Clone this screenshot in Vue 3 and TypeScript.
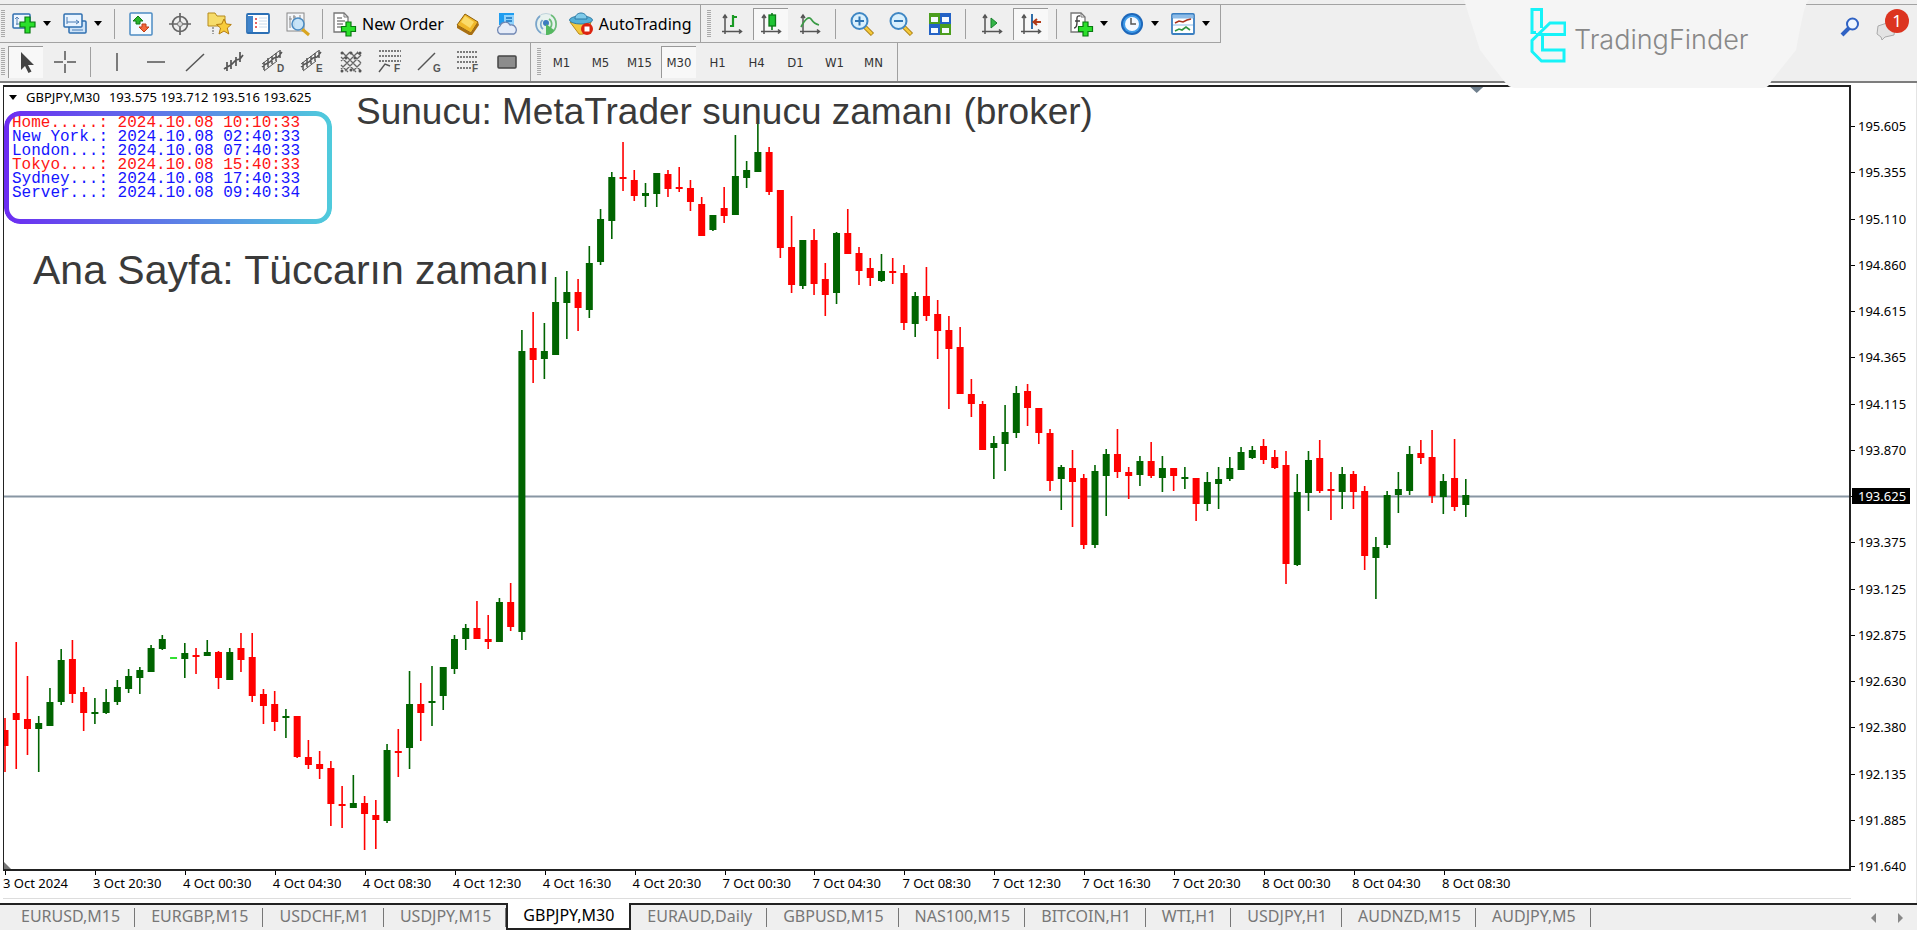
<script setup lang="ts">
import { ref } from 'vue'

type Kind = 'icon' | 'drop' | 'label' | 'sep' | 'end' | 'grip' | 'text'
interface Tool { kind: Kind; name?: string; icon?: string; active?: boolean }
type Candle = [up: number, high: number, top: number, bottom: number, low: number]

const plus = '<path d="M13 9h5v4.500h4.500v5H18V23h-5v-4.500H8.500v-5H13z" fill="#2be02b" stroke="#087a10" stroke-width="1.200"/>'
const axes = '<path d="M5 4v18M2 19.500h19M3 6l2-3 2 3M19 17.500l2.500 2-2.500 2" fill="none" stroke="#555" stroke-width="1.500"/>'
const sheet = '<path d="M2 1h10l4 4v15H2z" fill="#fff" stroke="#777" stroke-width="1.300"/><path d="M12 1v4h4" fill="none" stroke="#777"/>'
const letter = (c: string) => `<text x="16" y="22" font-size="10" font-weight="700" font-family="Liberation Sans, sans-serif" fill="#555">${c}</text>`
const bars = '<path d="M3 21v-8M7 18v-9M11 15V7M15 12V4M19 9V1M1 18l4-3 4-2 4-4 4-1 4-5" fill="none" stroke="#555" stroke-width="1.500"/>'
const lens = '<path d="M15 15l7.500 7.500" stroke="#a77c12" stroke-width="4.500"/><path d="M15 15l7 7" stroke="#f4c93b" stroke-width="2.500"/><circle cx="9.500" cy="9" r="8" fill="#d9f0fd" stroke="#3f87c4" stroke-width="2"/>'

const icons: Record<string, string> = {
  newchart: '<rect x="1" y="2" width="17" height="14" rx="1" fill="#eef6ff" stroke="#2f6fb0" stroke-width="1.500"/><path d="M5 5v8M3 7l2-2 2 2M4 12h5" fill="none" stroke="#5b86b5"/><path d="M13 5h5v5h5v5h-5v6h-5v-6H8v-5h5z" fill="#2be02b" stroke="#087a10" stroke-width="1.200"/>',
  profiles: '<rect x="6" y="9" width="17" height="12" rx="1" fill="#cfe4f8" stroke="#2f6fb0" stroke-width="1.500"/><rect x="1" y="2" width="18" height="13" rx="1" fill="#e9f4ff" stroke="#2f6fb0" stroke-width="1.500"/><path d="M4 5v7M4 10h12M13 8l3 2-3 2M9 18h11" fill="none" stroke="#4b7db5"/>',
  market: '<rect x="1" y="1" width="22" height="22" rx="1" fill="#f4faff" stroke="#4c8cc4" stroke-width="1.500"/><path d="M9 4l5 5h-3v3H7V9H4z" fill="#2bb52b" stroke="#117a17"/><path d="M15 20l-5-5h3v-3h4v3h3z" fill="#f2683a" stroke="#bf3d16"/>',
  target: '<circle cx="12" cy="12" r="7.500" fill="none" stroke="#666" stroke-width="1.700"/><path d="M12 1v22M1 12h22" stroke="#666" stroke-width="1.700"/><circle cx="12" cy="12" r="2.500" fill="#ddd" stroke="#777"/>',
  folder: '<path d="M1 1h7l2 3h8v10H1z" fill="#f6dc6a" stroke="#b58a1d"/><path d="M6 15v7" stroke="#555" stroke-dasharray="2 1"/><path d="M17 7l2.300 5 5 .5-4 3.500 1.500 6-4.800-3-5 3 1.500-6-4-3.500 5.200-.5z" fill="#f8cc3c" stroke="#b47c10"/>',
  terminal: '<rect x="1" y="2" width="22" height="19" rx="1" fill="#fff" stroke="#2b6fb5" stroke-width="1.800"/><path d="M2 4h5v16H2z" fill="#3f84cc"/><path d="M9 7h2M9 11h2M9 15h2" stroke="#d33" stroke-width="1.500"/><path d="M13 6h8M13 9h8M13 12h8M13 15h8" stroke="#cadcee"/>',
  tester: '<rect x="2" y="1" width="17" height="18" fill="#f5f7fa" stroke="#888"/><path d="M5 4v12M9 3v13M15 3v5M4 7h3M8 5h3" stroke="#888"/><path d="M17 17l7 6" stroke="#d9a520" stroke-width="3"/><circle cx="13" cy="12" r="6" fill="#bfe0f7" fill-opacity=".85" stroke="#4b8bc2" stroke-width="1.500"/>',
  order: sheet + '<path d="M5 6h5M5 9h8M5 12h6M5 15h4" stroke="#888" stroke-width="1.300"/><g transform="translate(1 1)">' + plus + '</g>',
  book: '<path d="M1 13L9 2l13 8-7 11z" fill="#f0b82a" stroke="#8f600c"/><path d="M1 13l14 8 7-11 1 3-7 10-3 0L1 16z" fill="#a86f12"/><path d="M9 4l9 6-4 6-9-6z" fill="#fbdc6b"/>',
  cloud: '<path d="M4 1h15v12H4z" fill="#1f9df0"/><path d="M9 3h10v10H9z" fill="#8fd2fb"/><path d="M11 6h6M11 9h6" stroke="#1673c0" stroke-width="1.500"/><path d="M5 22a4.500 4.500 0 0 1 0-8 5.500 5.500 0 0 1 10-1 5 5 0 0 1 4 9z" fill="#e6ecf8" stroke="#6f86b3" stroke-width="1.300"/>',
  signal: '<circle cx="12" cy="12" r="10.500" fill="#e8f2ef" stroke="#bfd3dc"/><path d="M7 21a10.500 10.500 0 0 1-1-17M9 17a6 6 0 0 1-.5-9" fill="none" stroke="#7aa5cb" stroke-width="1.700"/><path d="M17 3a10.500 10.500 0 0 1 0 18M15 7a6 6 0 0 1 0 10" fill="none" stroke="#6cbc78" stroke-width="1.700"/><circle cx="12" cy="11" r="3" fill="#3d7cc0"/><path d="M12 12v11c4 0 7-2 8-5z" fill="#55b860"/>',
  auto: '<path d="M1 10l9 12c3 1 8-1 9-3l3-9z" fill="#f5c93e" stroke="#b98a17"/><ellipse cx="12" cy="8" rx="11.500" ry="4" fill="#55b1d8" stroke="#2f7ba5"/><path d="M6 7c0-8 12-8 12 0z" fill="#7fcbea" stroke="#2f7ba5"/><circle cx="18" cy="17" r="6" fill="#dc2410"/><rect x="15.500" y="14.500" width="5" height="5" fill="#fff"/>',
  barchart: axes + '<path d="M13 3v12M10 14h3M13 5h4" stroke="#199a24" stroke-width="2.200"/>',
  candles: axes + '<path d="M13 1v17" stroke="#0c7a18" stroke-width="1.600"/><rect x="10" y="3" width="6.500" height="11" fill="#1fc433" stroke="#0c7a18" stroke-width="1.300"/>',
  line: axes + '<path d="M3 15c4-8 8-11 10-8s4 5 8 6" fill="none" stroke="#3b9b46" stroke-width="1.700"/>',
  zoomin: lens + '<path d="M5 9h9M9.500 4.500v9" stroke="#2f76b5" stroke-width="2"/>',
  zoomout: lens + '<path d="M5 9h9" stroke="#2f76b5" stroke-width="2"/>',
  tiles: '<path d="M1 1h11v11H1zM12 12h11v11H12z" fill="#4c9e1f"/><path d="M12 1h11v11H12zM1 12h11v11H1z" fill="#2463c6"/><path d="M3 5h7v5H3zM14 5h7v5h-7zM3 16h7v5H3zM14 16h7v5h-7z" fill="#f7fbff"/>',
  scroll: axes + '<path d="M11 6l6 5-6 5z" fill="#35b548" stroke="#17802a"/>',
  shift: axes + '<path d="M13 2v15" stroke="#2f6da8" stroke-width="2"/><path d="M22 10h-6M18 7l-3.500 3 3.500 3" fill="none" stroke="#b23a17" stroke-width="2"/>',
  indicators: sheet + '<path d="M11 4C7 3 8 7 8 10s0 6-3 6M6 9h5" fill="none" stroke="#444" stroke-width="1.400"/><g transform="translate(1 1)">' + plus + '</g>',
  clock: '<circle cx="12" cy="12" r="11" fill="#1d67ba"/><circle cx="12" cy="12" r="9" fill="#3f9be8"/><circle cx="12" cy="12" r="7" fill="#f3f9ff"/><path d="M11 6v6h5" fill="none" stroke="#555" stroke-width="1.500"/>',
  template: '<rect x="1" y="2" width="22" height="20" rx="1" fill="#fff" stroke="#3b7fc1" stroke-width="1.800"/><path d="M2 3h20v3H2zM2 13h20" fill="#8dbce8" stroke="#8dbce8"/><path d="M4 11l4-2 4 1 4-2 4-1" fill="none" stroke="#a8321d" stroke-width="1.600"/><path d="M4 19l4-2 3 1 4-3 4 3" fill="none" stroke="#2e9440" stroke-width="1.600"/>',
  cursor: '<path d="M7 1v18l4-4 3.500 7 3-1.500L14 14h6z" fill="#444"/>',
  cross: '<path d="M12 1v9M12 14v9M1 12h9M14 12h9" stroke="#555" stroke-width="1.500"/>',
  vline: '<path d="M12 3v18" stroke="#555" stroke-width="1.500"/>',
  hline: '<path d="M3 12h18" stroke="#555" stroke-width="1.500"/>',
  trend: '<path d="M3 21L21 4" stroke="#555" stroke-width="1.500"/>',
  channel: '<path d="M5 21v-9M9 19v-9M14 16V7M18 12V2M2 19l3-2 4-2 5-5 4-1 3-4" fill="none" stroke="#555" stroke-width="1.700"/>',
  regress: '<g transform="translate(0 -1)">' + bars + '<path d="M1 15L18 2M3 22L16 12" stroke="#555"/></g>' + letter('D'),
  equid: '<g transform="translate(0 -1)">' + bars + '<path d="M1 15L18 2M3 22L16 12" stroke="#555"/></g>' + letter('E'),
  grid: '<path d="M2 7l15 15M2 15l7 7M3 2l19 19M11 2l11 11M18 2l4 4M22 5L6 21M22 13l-8 8M19 2L2 19M11 2l-9 9" stroke="#666" stroke-width="1.300"/><g fill="#555"><circle cx="3" cy="3" r="1.500"/><circle cx="12" cy="3" r="1.500"/><circle cx="21" cy="3" r="1.500"/><circle cx="7" cy="8" r="1.500"/><circle cx="16" cy="8" r="1.500"/><circle cx="3" cy="21" r="1.500"/><circle cx="12" cy="20" r="1.500"/><circle cx="21" cy="21" r="1.500"/></g>',
  expand: '<path d="M1 1h22M1 6h22M1 11h22" stroke="#555" stroke-width="1.500" stroke-dasharray="2 1"/><path d="M1 22l6-8 5 2" fill="none" stroke="#555" stroke-width="1.400"/>' + letter('F'),
  gann: '<path d="M1 20L18 3" stroke="#555" stroke-width="1.500"/>' + letter('G'),
  fibo: '<path d="M1 2h20M1 7h20M1 12h20M1 18h14" stroke="#555" stroke-width="1.500" stroke-dasharray="2 1"/>' + letter('F'),
  rect: '<rect x="3" y="6" width="18" height="12" rx="1" fill="#8c8c8c" stroke="#444" stroke-width="1.500"/>'
}

const i = (icon: string, name: string, active = false): Tool => ({ kind: 'icon', icon, name, active })
const d = (icon: string, name: string): Tool => ({ kind: 'drop', icon, name })
const l = (icon: string, name: string): Tool => ({ kind: 'label', icon, name })
const t = (name: string, active = false): Tool => ({ kind: 'text', name, active })
const sep: Tool = { kind: 'sep' }
const end: Tool = { kind: 'end' }
const grip: Tool = { kind: 'grip' }

const toolbars: Tool[][] = [
  [grip, d('newchart', 'New chart'), d('profiles', 'Profiles'), sep,
    i('market', 'Market watch'), i('target', 'Data window'), i('folder', 'Navigator'), i('terminal', 'Terminal'), i('tester', 'Strategy tester'), sep,
    l('order', 'New Order'), i('book', 'MetaEditor'), i('cloud', 'Cloud'), i('signal', 'Signals'), l('auto', 'AutoTrading'), end,
    grip, i('barchart', 'Bar chart'), i('candles', 'Candlesticks', true), i('line', 'Line chart'), sep,
    i('zoomin', 'Zoom in'), i('zoomout', 'Zoom out'), i('tiles', 'Tile windows'), sep,
    i('scroll', 'Auto scroll'), i('shift', 'Chart shift', true), sep,
    d('indicators', 'Indicators'), d('clock', 'Periods'), d('template', 'Templates'), end],
  [grip, i('cursor', 'Cursor', true), i('cross', 'Crosshair'), sep,
    i('vline', 'Vertical line'), i('hline', 'Horizontal line'), i('trend', 'Trendline'), i('channel', 'Channel'), i('regress', 'Deviation channel'), i('equid', 'Equidistant channel'),
    i('grid', 'Gann grid'), i('expand', 'Fibonacci expansion'), i('gann', 'Gann line'), i('fibo', 'Fibonacci retracement'), i('rect', 'Rectangle'), end,
    grip, t('M1'), t('M5'), t('M15'), t('M30', true), t('H1'), t('H4'), t('D1'), t('W1'), t('MN'), end]
]

const clocks = [
  { text: 'Home.....: 2024.10.08 10:10:33', hot: true },
  { text: 'New York.: 2024.10.08 02:40:33', hot: false },
  { text: 'London...: 2024.10.08 07:40:33', hot: false },
  { text: 'Tokyo....: 2024.10.08 15:40:33', hot: true },
  { text: 'Sydney...: 2024.10.08 17:40:33', hot: false },
  { text: 'Server...: 2024.10.08 09:40:34', hot: false }
]

const prices = ['195.605', '195.355', '195.110', '194.860', '194.615', '194.365', '194.115', '193.870', '193.625', '193.375', '193.125', '192.875', '192.630', '192.380', '192.135', '191.885', '191.640']
const currentPrice = '193.625'
const times = ['3 Oct 2024', '3 Oct 20:30', '4 Oct 00:30', '4 Oct 04:30', '4 Oct 08:30', '4 Oct 12:30', '4 Oct 16:30', '4 Oct 20:30', '7 Oct 00:30', '7 Oct 04:30', '7 Oct 08:30', '7 Oct 12:30', '7 Oct 16:30', '7 Oct 20:30', '8 Oct 00:30', '8 Oct 04:30', '8 Oct 08:30']
const tabs = ['EURUSD,M15', 'EURGBP,M15', 'USDCHF,M1', 'USDJPY,M15', 'GBPJPY,M30', 'EURAUD,Daily', 'GBPUSD,M15', 'NAS100,M15', 'BITCOIN,H1', 'WTI,H1', 'USDJPY,H1', 'AUDNZD,M15', 'AUDJPY,M5']
const activeTab = ref('GBPJPY,M30')

const candles: Candle[] = [
  [0, 718, 730, 746, 772], [0, 642, 713, 720, 769], [0, 676, 719, 729, 755], [1, 716, 723, 729, 772], [1, 688, 702, 726, 726],
  [1, 649, 660, 702, 705], [0, 640, 659, 694, 703], [0, 687, 692, 713, 731], [1, 698, 712, 713, 724], [1, 689, 702, 713, 714],
  [1, 680, 687, 702, 705], [1, 669, 676, 689, 693], [1, 667, 670, 678, 694], [1, 645, 648, 672, 672], [1, 635, 639, 649, 650],
  [2, 657, 657, 659, 659], [1, 643, 653, 659, 678], [0, 648, 655, 656, 674], [1, 640, 652, 656, 656], [0, 651, 652, 678, 689],
  [1, 648, 652, 680, 680], [0, 633, 648, 660, 672], [0, 633, 657, 696, 702], [0, 689, 694, 706, 724], [0, 691, 704, 722, 731],
  [1, 709, 716, 718, 738], [0, 716, 716, 757, 758], [0, 740, 757, 765, 769], [0, 751, 764, 769, 779], [0, 761, 768, 804, 826],
  [0, 786, 804, 806, 828], [1, 775, 803, 808, 808], [0, 796, 803, 814, 850], [0, 800, 815, 820, 849], [1, 744, 750, 821, 823],
  [0, 729, 751, 753, 777], [1, 671, 704, 748, 769], [0, 683, 704, 713, 741], [1, 666, 701, 703, 726], [1, 667, 667, 696, 710],
  [1, 635, 639, 669, 674], [1, 624, 628, 639, 650], [0, 601, 628, 639, 639], [0, 615, 639, 642, 649], [1, 598, 602, 642, 642],
  [0, 583, 602, 627, 631], [1, 330, 351, 632, 640], [0, 312, 348, 360, 383], [1, 323, 351, 359, 379], [1, 277, 302, 355, 355],
  [1, 271, 292, 303, 339], [0, 279, 292, 308, 331], [1, 246, 263, 310, 318], [1, 209, 219, 262, 265], [1, 172, 177, 221, 239],
  [0, 142, 177, 179, 191], [0, 170, 180, 196, 201], [1, 183, 193, 196, 207], [1, 173, 173, 194, 207], [0, 170, 174, 189, 197],
  [0, 167, 187, 188, 192], [0, 180, 188, 202, 211], [0, 197, 204, 236, 236], [1, 215, 215, 230, 231], [0, 187, 208, 216, 223],
  [1, 135, 176, 215, 215], [1, 161, 170, 178, 188], [1, 124, 152, 172, 172], [0, 147, 152, 192, 195], [0, 190, 190, 248, 258],
  [0, 216, 247, 285, 293], [1, 240, 240, 286, 289], [0, 229, 240, 284, 295], [0, 263, 279, 295, 316], [1, 232, 233, 293, 304],
  [0, 209, 233, 254, 254], [0, 247, 253, 271, 285], [0, 258, 268, 278, 286], [1, 254, 271, 281, 282], [0, 258, 271, 273, 284],
  [0, 265, 273, 323, 330], [1, 292, 296, 324, 337], [0, 267, 296, 316, 321], [0, 300, 314, 331, 359], [0, 316, 330, 349, 409],
  [0, 327, 347, 394, 394], [0, 379, 394, 404, 417], [0, 401, 404, 450, 450], [1, 436, 443, 448, 479], [1, 405, 432, 444, 471],
  [1, 386, 393, 433, 438], [0, 384, 391, 408, 426], [0, 408, 408, 433, 444], [0, 429, 433, 481, 491], [1, 465, 467, 479, 510],
  [0, 450, 468, 482, 527], [0, 474, 478, 545, 549], [1, 465, 471, 545, 548], [1, 449, 454, 476, 516], [0, 429, 454, 472, 478],
  [0, 467, 472, 476, 499], [1, 456, 461, 475, 486], [0, 442, 461, 476, 478], [1, 456, 468, 478, 492], [0, 468, 468, 476, 491],
  [1, 467, 477, 478, 489], [0, 478, 478, 504, 521], [1, 472, 482, 504, 511], [1, 467, 479, 484, 509], [1, 457, 468, 479, 481],
  [1, 447, 452, 470, 470], [1, 446, 450, 458, 459], [0, 439, 446, 460, 464], [0, 450, 457, 468, 469], [0, 451, 465, 564, 584],
  [1, 474, 492, 565, 566], [1, 451, 460, 493, 511], [0, 440, 458, 491, 493], [0, 472, 489, 491, 520], [1, 467, 474, 492, 509],
  [0, 471, 474, 492, 509], [0, 486, 491, 556, 570], [1, 537, 547, 558, 599], [1, 491, 495, 545, 548], [1, 472, 489, 495, 513],
  [1, 446, 454, 491, 495], [0, 440, 453, 458, 464], [0, 430, 457, 496, 503], [1, 474, 481, 497, 514], [0, 439, 478, 507, 511],
  [1, 479, 495, 505, 517]
]
const colours = ['#ff0000', '#006400', '#32e032']
const shapes = candles.map(([up, high, top, bottom, low], n) => ({
  x: 5 + n * 11.243, high, low, top, height: Math.max(bottom - top, 2), fill: colours[up]
}))
</script>

<template>
  <main class="app">
    <header class="tools">
      <div v-for="(row, r) in toolbars" :key="r" class="row">
        <div class="bar">
          <template v-for="(tool, n) in row" :key="n">
            <span v-if="tool.kind === 'sep' || tool.kind === 'end' || tool.kind === 'grip'" :class="tool.kind"></span>
            <button v-else type="button" :class="['tool', tool.kind, { active: tool.active }]" :aria-label="tool.name">
              <svg v-if="tool.icon" class="icon" viewBox="0 0 24 24" aria-hidden="true" v-html="icons[tool.icon]"></svg>
              <span v-if="tool.kind === 'label' || tool.kind === 'text'">{{ tool.name }}</span>
              <span v-if="tool.kind === 'drop'" class="caret"></span>
            </button>
          </template>
        </div>
      </div>
      <div class="corner">
        <button type="button" class="plain" aria-label="Search">
          <svg width="20" height="20" viewBox="0 0 20 20"><path d="M2 18l7-7" stroke="#2f62c4" stroke-width="4" /><circle cx="12.500" cy="7" r="5.500" fill="#eef6ff" stroke="#2f62c4" stroke-width="2" /></svg>
        </button>
        <button type="button" class="plain chat" aria-label="Messages">
          <svg width="24" height="20" viewBox="0 0 24 20"><path d="M2 5l9-3 8 4-1 8-9 2-3 3-1-3-4-3z" fill="#e3e3e3" stroke="#aaa" /></svg>
          <span class="badge">1</span>
        </button>
      </div>
      <div class="brand">
        <svg class="panel" viewBox="0 0 346 88" preserveAspectRatio="none"><path d="M0 0h346c-5 0-8 20-14 50L308 80c-3 6-5 8-10 8H52c-5 0-8-2-12-7L16 50z" fill="#f5f5f5" /></svg>
        <svg class="mark" width="36" height="56" viewBox="0 0 36 56" fill="none" stroke="#16f3f8" stroke-width="3"><path d="M11.500 21V2.500H2v23h4M6 27.500h29V16H20L2 33.500v11L11.500 54H34V43H12.500V29" /></svg>
        <span class="wordmark">TradingFinder</span>
      </div>
    </header>

    <section class="chart">
      <div class="plot">
        <svg class="candles" viewBox="4 87 1846 782" preserveAspectRatio="none">
          <path d="M4 496.500H1850" stroke="#8896a3" stroke-width="2" />
          <g v-for="(c, n) in shapes" :key="n">
            <path :d="`M${c.x} ${c.high}V${c.low}`" :stroke="c.fill" stroke-width="1.600" />
            <rect :x="c.x - 3.500" :y="c.top" width="7" :height="c.height" :fill="c.fill" />
          </g>
          <path d="M1471 87h13l-6.500 6z" fill="#6f7f8d" />
          <path d="M4 862l7 7H4z" fill="#777" />
        </svg>
        <div class="quote"><span class="caret"></span><span>GBPJPY,M30</span><span>193.575 193.712 193.516 193.625</span></div>
        <div class="clocks">
          <div v-for="c in clocks" :key="c.text" :class="{ hot: c.hot }">{{ c.text }}</div>
        </div>
        <div class="note note-server">Sunucu: MetaTrader sunucu zamanı (broker)</div>
        <div class="note note-home">Ana Sayfa: Tüccarın zamanı</div>
      </div>
      <div class="prices">
        <span v-for="p in prices" :key="p" :class="['price', { now: p === currentPrice }]">{{ p }}</span>
      </div>
      <div class="times">
        <span v-for="time in times" :key="time" class="time">{{ time }}</span>
      </div>
    </section>

    <nav class="tabs">
      <button v-for="tab in tabs" :key="tab" type="button" :class="['tab', { current: tab === activeTab }]" @click="activeTab = tab">{{ tab }}</button>
      <div class="scrollers">
        <button type="button" class="plain" aria-label="Previous"><svg width="6" height="10" viewBox="0 0 6 10"><path d="M5 0v10L0 5z" fill="#888" /></svg></button>
        <button type="button" class="plain" aria-label="Next"><svg width="6" height="10" viewBox="0 0 6 10"><path d="M1 0v10l5-5z" fill="#888" /></svg></button>
      </div>
    </nav>
  </main>
</template>

<style>
body { margin: 0; background: #fff; }
</style>

<style scoped>
* { box-sizing: border-box; }
button { margin: 0; padding: 0; border: 0; background: none; font: inherit; color: inherit; }
.app { display: flex; flex-direction: column; min-height: 100vh; padding-top: 4px; border-bottom: 2px solid #fff; font-family: "Noto Sans", "Open Sans", sans-serif; color: #000; background: #efefef; overflow: hidden; }
.tools { position: relative; border-top: 1px solid #a3a3a3; border-bottom: 2px solid #7d7d7d; }
.row { display: flex; height: 38px; }
.bar { display: flex; align-items: center; padding-left: 1px; border-bottom: 1px solid #a3a3a3; }
.row + .row .bar { border-bottom: 0; }
.grip { width: 4px; height: 28px; margin-right: 1px; background: repeating-linear-gradient(#aaa 0 1px, #efefef 1px 2px); }
.sep { width: 1px; height: 30px; margin: 0 6px; background: #a0a0a0; }
.end { width: 1px; align-self: stretch; margin: 0 6px 0 4px; background: #a0a0a0; }
.end:last-child { margin-right: 0; }
.tool { display: flex; align-items: center; justify-content: center; height: 32px; }
.icon { width: 24px; height: 24px; flex: none; overflow: visible; }
.tool.icon { width: 39px; height: 32px; }
.drop { width: 51px; gap: 7px; justify-content: flex-start; padding-left: 6px; }
.label { gap: 6px; padding: 0 5px 0 3px; font-size: 16px; }
.text { width: 35px; margin: 0 2px; font-family: "DejaVu Sans Condensed", "Noto Sans", sans-serif; font-size: 13px; color: #333; }
.active { background: #f8f8f8; border-top: 1px solid #999; border-left: 1px solid #999; }
.tool.icon.active { width: 35px; margin: 0 2px; }
.caret { flex: none; width: 0; height: 0; border: 4px solid transparent; border-top: 5px solid #000; border-bottom: 0; }
.plain { display: flex; align-items: center; }
.corner { position: absolute; top: 8px; right: 10px; display: flex; gap: 16px; }
.chat { position: relative; width: 31px; height: 28px; align-items: flex-end; }
.badge { position: absolute; top: -4px; right: -2px; width: 24px; height: 24px; border-radius: 50%; background: #dc3420; color: #fff; font-size: 17px; line-height: 24px; text-align: center; }
.brand { position: absolute; z-index: 2; top: -5px; right: 107px; width: 346px; height: 88px; display: flex; align-items: center; padding: 0 0 18px 66px; gap: 8px; }
.panel { position: absolute; inset: 0; width: 100%; height: 100%; }
.mark { position: relative; flex: none; }
.wordmark { position: relative; margin-top: 8px; font-family: Inter, Roboto, sans-serif; font-weight: 300; font-size: 27px; color: #888; }
.chart { flex: 1; display: grid; grid-template-columns: minmax(0, 1fr) 65px; grid-template-rows: minmax(400px, 1fr) 32px; padding: 2px 0 0 3px; border-right: 1px solid #e4e4e4; background: #fff; }
.plot { position: relative; border: 2px solid #222; border-left-width: 1px; }
.candles { position: absolute; inset: 0; width: 100%; height: 100%; }
.quote { position: relative; display: flex; align-items: center; gap: 9px; padding-left: 5px; height: 20px; font-size: 13px; }
.clocks { position: relative; width: 328px; height: 113px; margin-top: 4px; padding: 5px 0 0 8px; font-family: "Liberation Mono", monospace; font-size: 16px; line-height: 14px; white-space: pre; color: #1414ff; }
.clocks::before { content: ""; position: absolute; inset: 0; border-radius: 16px; padding: 5px; background: linear-gradient(90deg, #6c2cf2, #4fcbdc); mask: linear-gradient(#000 0 0) content-box exclude, linear-gradient(#000 0 0); }
.hot { color: #ff1414; }
.note { position: absolute; white-space: nowrap; font-family: "Liberation Sans", Arial, sans-serif; line-height: 44px; color: #3a3a3a; }
.note-server { top: 3px; left: 352px; font-size: 37px; }
.note-home { top: 161px; left: 29px; font-size: 41px; }
.prices { grid-row: 1 / span 2; grid-column: 2; display: flex; flex-direction: column; justify-content: space-between; padding: 33px 0 29px; font-size: 13px; }
.price { position: relative; width: 58px; margin-left: 1px; padding-left: 6px; line-height: 16px; }
.price::before { content: ""; position: absolute; left: -1px; top: 8px; width: 4px; height: 1px; background: #000; }
.now { background: #000; color: #fff; }
.times { display: flex; border-bottom: 1px solid #ddd; margin-bottom: 4px; padding-left: 1px; font-size: 13px; }
.time { position: relative; flex: 0 0 4.87%; white-space: nowrap; line-height: 24px; margin-left: -1px; margin-right: 1px; }
.time::before { content: ""; position: absolute; left: 2px; top: 0; width: 1px; height: 4px; background: #000; }
.tabs { display: flex; height: 27px; border-top: 2px solid #222; padding-left: 5px; font-size: 16px; line-height: 22px; color: #777; }
.tab { position: relative; padding: 0 15px 3px 16px; white-space: nowrap; }
.tab::after { content: ""; position: absolute; right: 0; top: 3px; width: 1px; height: 19px; background: #777; }
.current { margin-top: -2px; background: #fff; border: 2px solid #222; border-top: 0; color: #000; padding: 0 15px 1px; }
.current::after { display: none; }
.scrollers { display: flex; gap: 20px; margin: 0 14px 0 auto; }
</style>
